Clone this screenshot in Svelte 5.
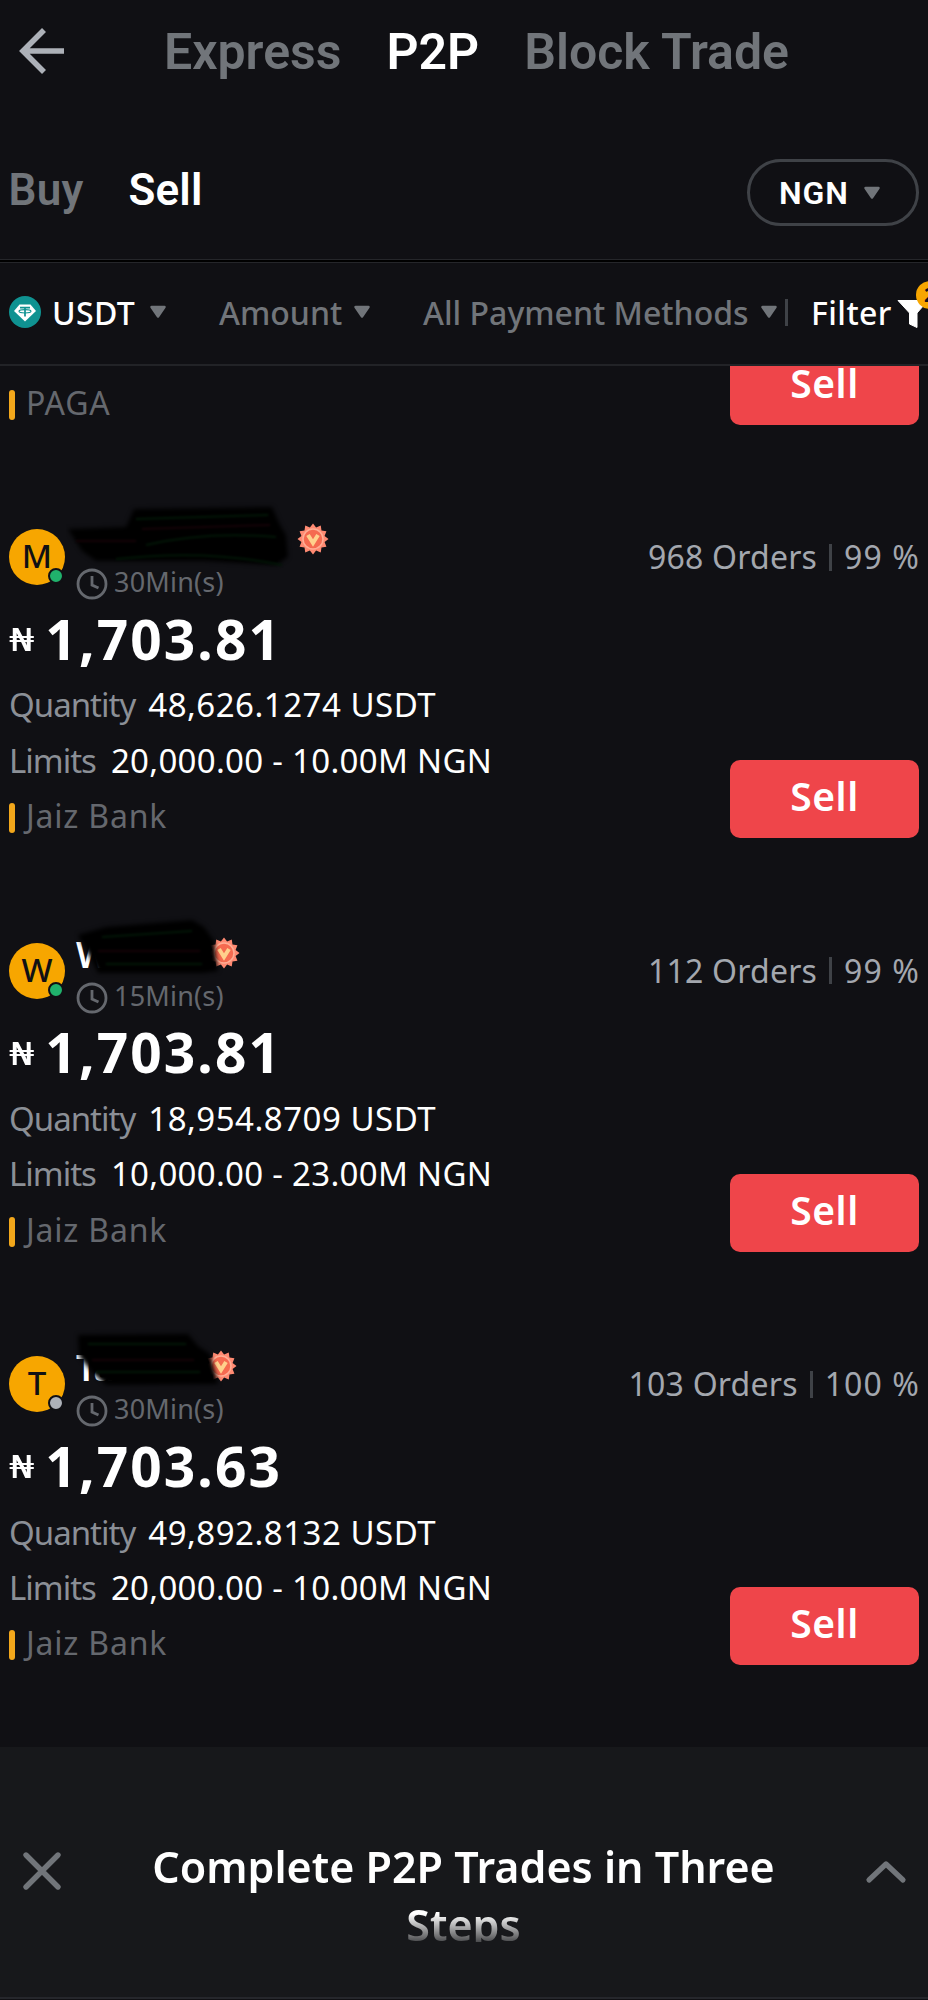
<script lang="ts">
	const topTabs = ['Express', 'P2P', 'Block Trade'];
	let activeTab = 'P2P';
	let side = 'Sell';

	const offers = [
		{
			name: '',
			initial: 'M',
			online: true,
			minutes: 30,
			orders: 968,
			rate: 99,
			price: '1,703.81',
			quantity: '48,626.1274',
			limits: '20,000.00 - 10.00M',
			bank: 'Jaiz Bank',
			badgeX: 221,
			cover: 'M-8 34 L50 32 L58 14 L196 12 L204 30 L210 40 L212 62 L200 70 L130 66 L20 66 L6 56 Z',
			green: 'M60 24 L192 20 M70 50 Q130 36 200 42 M40 64 Q130 54 206 70',
			red: 'M0 46 H60 M66 34 L194 30'
		},
		{
			name: 'W',
			initial: 'W',
			online: true,
			minutes: 15,
			orders: 112,
			rate: 99,
			price: '1,703.81',
			quantity: '18,954.8709',
			limits: '10,000.00 - 23.00M',
			bank: 'Jaiz Bank',
			badgeX: 132,
			cover: 'M2 26 L30 18 L116 11 L128 18 L138 32 L140 48 L142 62 L126 64 L22 64 L14 48 Z',
			green: 'M26 28 L116 22 M30 55 H126',
			red: 'M22 42 H124'
		},
		{
			name: 'Ta',
			initial: 'T',
			online: false,
			minutes: 30,
			orders: 103,
			rate: 100,
			price: '1,703.63',
			quantity: '49,892.8132',
			limits: '20,000.00 - 10.00M',
			bank: 'Jaiz Bank',
			badgeX: 129,
			cover: 'M2 13 L112 12 L122 24 L134 32 L139 50 L142 62 L30 63 L16 50 L3 34 Z',
			green: 'M12 22 H110 M20 50 H124',
			red: 'M16 38 H118'
		}
	];

	// 12-pointed outline of the merchant badge
	const star = Array.from({ length: 24 }, (_, i) => {
		const r = i % 2 ? 12 : 15.5;
		const a = (i * Math.PI) / 12 - Math.PI / 2;
		return `${16 + r * Math.cos(a)},${16 + r * Math.sin(a)}`;
	}).join(' ');
</script>

{#snippet caret()}
	<svg class="caret" width="18" height="14" viewBox="0 0 18 14">
		<path d="M2.5 2 H15.5 L9 11.5 Z" fill="#71757a" stroke="#71757a" stroke-width="2.5" stroke-linejoin="round" />
	</svg>
{/snippet}

<div class="page">
	<header>
		<svg class="back" width="46" height="46" viewBox="0 0 46 46">
			<path d="M25 2 L4 23 L25 44 M4 23 H45" fill="none" stroke="#adb1b8" stroke-width="5.6" />
		</svg>
		{#each topTabs as tab}
			<span class:active={tab === activeTab}>{tab}</span>
		{/each}
	</header>

	<div class="sides">
		{#each ['Buy', 'Sell'] as item}
			<span class:active={item === side}>{item}</span>
		{/each}
		<button class="currency">NGN {@render caret()}</button>
	</div>

	<div class="filters">
		<svg class="coin" width="32" height="32" viewBox="0 0 32 32">
			<circle cx="16" cy="16" r="16" fill="#0f9291" />
			<path d="M10.5 8.5 H21.5 L27 15 L16 25.5 L5 15 Z" fill="#fff" />
			<path d="M11 11.7 H21 M16 12 V20.5" stroke="#0f9291" stroke-width="1.7" />
			<ellipse cx="16" cy="15.3" rx="6" ry="1.7" fill="none" stroke="#0f9291" stroke-width="1.1" />
		</svg>
		<span class="asset">USDT</span>
		{@render caret()}
		<span class="amount">Amount</span>
		{@render caret()}
		<span class="methods">All Payment Methods</span>
		{@render caret()}
		<i class="divider"></i>
		<span class="filter">Filter</span>
		<div class="funnel">
			<svg width="32" height="30" viewBox="0 0 32 30">
				<path d="M1 1.5 H31 L20 14 V28.5 L12.5 25 V14 Z" fill="#fff" stroke="#fff" stroke-linejoin="round" />
			</svg>
			<b class="count">2</b>
		</div>
	</div>

	<div class="list">
		<div class="tail">
			<span class="bank">PAGA</span>
			<button class="sell">Sell</button>
		</div>

		{#each offers as offer}
			<article>
				<div class="trader">
					<div class="avatar">
						{offer.initial}
						<i class:online={offer.online}></i>
					</div>
					<div class="who">
						<div class="name">{offer.name}</div>
						<div class="time">
							<svg width="32" height="32" viewBox="0 0 32 32" fill="none" stroke="#65686e" stroke-width="2.8">
								<circle cx="16" cy="16" r="14" />
								<path d="M16 8 V17 L22.5 20" />
							</svg>
							<span>{offer.minutes}Min(s)</span>
						</div>
						<svg class="marks" width="280" height="90" viewBox="-10 0 280 90">
							<g transform="translate({offer.badgeX} 28)">
								<polygon points={star} fill="#ff8a72" />
								<circle cx="16" cy="16" r="10" fill="#f56a50" stroke="#ffae95" stroke-width="1.5" />
								<path d="M11 12 L16 20 L21 12" fill="none" stroke="#ffd08c" stroke-width="4" />
							</g>
							<path class="cover" d={offer.cover} />
							<path class="streak" d={offer.green} stroke="#021707" />
							<path class="streak" d={offer.red} stroke="#150207" />
						</svg>
					</div>
					<div class="stats">
						<span>{offer.orders} Orders</span>
						<i></i>
						<span class="rate">{offer.rate} %</span>
					</div>
				</div>
				<div class="price"><small>₦</small><strong>{offer.price}</strong></div>
				<div class="row"><span class="label">Quantity</span><span>{offer.quantity} USDT</span></div>
				<div class="row"><span class="label">Limits</span><span class="limits">{offer.limits} NGN</span></div>
				<div class="foot">
					<span class="bank">{offer.bank}</span>
					<button class="sell">Sell</button>
				</div>
			</article>
		{/each}
	</div>

	<footer>
		<svg class="close" width="40" height="40" viewBox="0 0 40 40">
			<path d="M4 4 L36 36 M36 4 L4 36" stroke="#71757a" stroke-width="5.4" stroke-linecap="round" />
		</svg>
		<h2>Complete P2P Trades in Three Steps</h2>
		<svg class="up" width="42" height="24" viewBox="0 0 42 24">
			<path d="M4 20 L21 4 L38 20" fill="none" stroke="#71757a" stroke-width="5.2" stroke-linecap="round" stroke-linejoin="round" />
		</svg>
	</footer>
</div>

<style>
	:global(body) {
		background: #101014;
	}

	.page {
		width: 928px;
		height: 2000px;
		overflow: hidden;
		display: flex;
		flex-direction: column;
		background: #101014;
		color: #fff;
		font-family: 'Noto Sans', 'Open Sans', sans-serif;
		white-space: nowrap;
	}

	button {
		border: 0;
		padding: 0;
		background: none;
		color: inherit;
		font: inherit;
	}

	svg {
		display: block;
		flex: none;
	}

	header {
		height: 102px;
		box-sizing: border-box;
		padding: 1px 0 0 19px;
		display: flex;
		align-items: center;
		gap: 45px;
		font: 600 50px Roboto, sans-serif;
		color: #71757a;
	}

	.back {
		margin-right: 54px;
		margin-top: -2px;
	}

	.active {
		color: #fff;
	}

	.sides {
		height: 157px;
		box-sizing: border-box;
		padding: 19px 9px 0 8.5px;
		display: flex;
		align-items: center;
		gap: 45px;
		font: 600 44px Roboto, sans-serif;
		letter-spacing: 0.2px;
		color: #71757a;
	}

	.currency {
		width: 172px;
		height: 67px;
		box-sizing: border-box;
		margin: 22px 0 17px auto;
		padding-left: 29px;
		display: flex;
		align-items: center;
		gap: 14px;
		border: 3px solid #3f4247;
		border-radius: 34px;
		font: 600 32px Roboto, sans-serif;
		letter-spacing: 0.9px;
		color: #fff;
	}

	.filters {
		height: 107px;
		box-sizing: border-box;
		padding: 0 0 0 9px;
		display: flex;
		align-items: center;
		border-top: 1px solid #25262a;
		border-bottom: 2px solid #222327;
		box-shadow: inset 0 2px #000, inset 0 3px #25262a;
		font-weight: 500;
		font-size: 32px;
		color: #71757a;
	}

	.filters > * {
		flex: none;
	}

	.filters .asset {
		width: 83px;
		margin-left: 11px;
		margin-right: 14px;
		letter-spacing: 0.4px;
		color: #fff;
	}

	.filters .amount {
		width: 121px;
		margin-left: 52px;
		margin-right: 13px;
	}

	.filters .methods {
		width: 324px;
		margin-left: 52px;
		margin-right: 13px;
	}

	.divider {
		width: 3px;
		height: 27px;
		margin: 0 23px 0 7px;
		background: #3f4247;
	}

	.filters .filter {
		width: 80px;
		margin-right: 6px;
		letter-spacing: 0.4px;
		color: #fff;
	}

	.funnel {
		position: relative;
		margin-top: 3px;
	}

	.count {
		position: absolute;
		left: 19px;
		top: -18px;
		width: 32px;
		height: 28px;
		border-radius: 14px;
		background: #f7a600;
		color: #101014;
		font-size: 20px;
		line-height: 28px;
		text-indent: 8px;
	}

	.list {
		height: 1381px;
		overflow: hidden;
	}

	.tail {
		height: 59px;
		padding: 0 9px 0 9px;
		display: flex;
		align-items: flex-end;
		justify-content: space-between;
	}

	.bank {
		height: 30px;
		padding-left: 17px;
		margin-bottom: 5px;
		position: relative;
		line-height: 26px;
		font-size: 32px;
		letter-spacing: 0.8px;
		color: #65686e;
	}

	.bank::before {
		content: '';
		position: absolute;
		left: 0;
		top: 0;
		width: 6px;
		height: 30px;
		border-radius: 3px;
		background: #f2a71b;
	}

	.sell {
		width: 189px;
		height: 78px;
		padding-bottom: 6px;
		border-radius: 10px;
		background: #ef454a;
		font-size: 39px;
		font-weight: 600;
		line-height: 72px;
		letter-spacing: 0.6px;
	}

	article {
		height: 413.7px;
		box-sizing: border-box;
		padding: 104px 9px 0 9px;
		display: flex;
		flex-direction: column;
	}

	.trader {
		height: 84px;
		display: flex;
		align-items: flex-start;
	}

	.avatar {
		position: relative;
		width: 56px;
		height: 56px;
		border-radius: 50%;
		background: #f7a600;
		color: #101014;
		font-size: 33px;
		font-weight: 500;
		line-height: 54px;
		text-align: center;
	}

	.avatar i {
		position: absolute;
		right: 1px;
		bottom: 1px;
		width: 12px;
		height: 12px;
		border: 2px solid #101014;
		border-radius: 50%;
		background: #adb1b8;
	}

	.avatar i.online {
		background: #20b26c;
	}

	.who {
		position: relative;
		margin-left: 11px;
	}

	.name {
		height: 39px;
		line-height: 24px;
		font-size: 36px;
		font-weight: 600;
	}

	.time {
		display: flex;
		align-items: center;
		gap: 6px;
		height: 32px;
		font-size: 27px;
		line-height: 26px;
		letter-spacing: 0.2px;
		color: #65686e;
	}

	.time span {
		margin-top: -4px;
	}

	.marks {
		position: absolute;
		left: -10px;
		top: -34px;
	}

	.cover {
		fill: #000;
		filter: blur(2px);
	}

	.streak {
		fill: none;
		stroke-width: 2;
		filter: blur(1px);
	}

	.stats {
		margin-left: auto;
		display: flex;
		align-items: center;
		gap: 12px;
		height: 56px;
		font-size: 32px;
		line-height: 54px;
		letter-spacing: 0.2px;
		color: #a3a7ae;
	}

	.stats i {
		width: 3px;
		height: 27px;
		background: #3f4247;
	}

	.rate {
		margin-right: -1px;
		letter-spacing: 1.1px;
	}

	.price {
		height: 50px;
		padding-bottom: 14px;
		display: flex;
		align-items: center;
		gap: 16px;
	}

	/* the naira sign is drawn wider than the digits */
	.price small {
		margin-top: 4px;
		font-family: 'DejaVu Sans', sans-serif;
		font-size: 32px;
		transform: scaleX(1.25);
		transform-origin: left;
	}

	.price strong {
		font-size: 55px;
		font-weight: 700;
		letter-spacing: 2.1px;
	}

	.row {
		height: 55.5px;
		display: flex;
		align-items: center;
		gap: 13px;
		font-size: 33px;
		letter-spacing: 0.5px;
	}

	.row .label {
		color: #8b8f96;
		letter-spacing: -1px;
	}

	.row .limits {
		margin-left: 2px;
		letter-spacing: 0.3px;
	}

	.foot {
		display: flex;
		align-items: flex-end;
		justify-content: space-between;
		height: 44px;
		margin-top: 6px;
	}

	footer {
		height: 252px;
		box-sizing: border-box;
		padding: 91px 21px 0 22px;
		display: flex;
		align-items: flex-start;
		justify-content: space-between;
		background: #17181b;
		border-bottom: 2px solid #26272c;
	}

	h2 {
		width: 640px;
		height: 104px;
		margin: 0;
		font-size: 43px;
		font-weight: 600;
		line-height: 58px;
		text-align: center;
		white-space: normal;
		mask-image: linear-gradient(#000 76px, transparent 112px);
	}

	.close {
		margin-top: 13px;
	}

	.up {
		margin-top: 22px;
	}
</style>
